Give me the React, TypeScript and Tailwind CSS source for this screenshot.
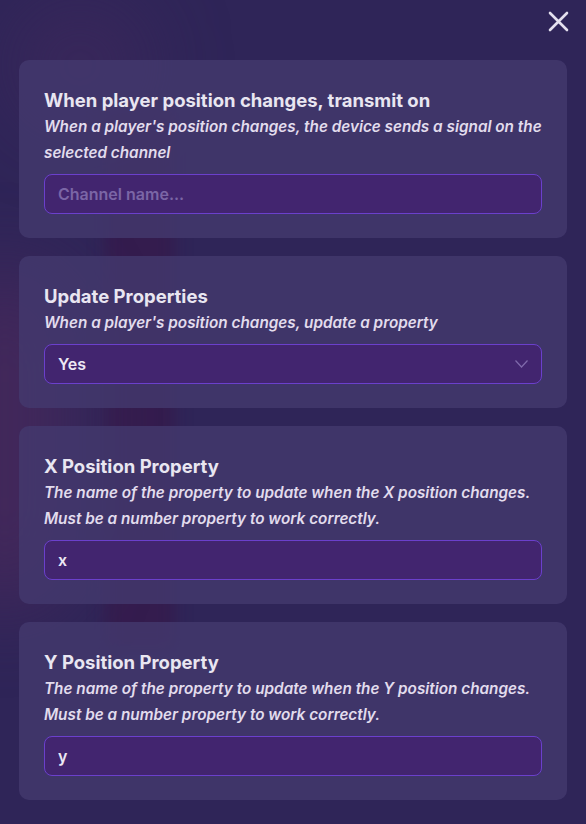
import { useState } from 'react';

const fields = [
  {
    title: 'When player position changes, transmit on',
    description: "When a player's position changes, the device sends a signal on the selected channel",
    kind: 'input',
    value: '',
    placeholder: 'Channel name...',
  },
  {
    title: 'Update Properties',
    description: "When a player's position changes, update a property",
    kind: 'select',
    value: 'Yes',
    placeholder: '',
  },
  {
    title: 'X Position Property',
    description: 'The name of the property to update when the X position changes. Must be a number property to work correctly.',
    kind: 'input',
    value: 'x',
    placeholder: '',
  },
  {
    title: 'Y Position Property',
    description: 'The name of the property to update when the Y position changes. Must be a number property to work correctly.',
    kind: 'input',
    value: 'y',
    placeholder: '',
  },
];

function Field({ field }: { field: (typeof fields)[number] }) {
  const [value, setValue] = useState(field.value);

  return (
    <div className="rounded-[10px] bg-[#433a6e]/80 px-[25px] pt-[26px] pb-6">
      <h2 className="text-[18.5px] leading-7 font-bold text-[#e9e6f1]">{field.title}</h2>
      <p className="text-[15.3px] leading-[26px] font-semibold italic text-[#e2dced]">{field.description}</p>
      {field.kind === 'select' ? (
        <div className="mt-2 flex h-10 items-center justify-between rounded-lg border border-[#6b40cc] bg-[#42256f] pr-[13px] pl-[13px]">
          <span className="text-base font-semibold text-[#ece8f4]">{value}</span>
          <svg width="13" height="8" viewBox="0 0 13 8" fill="none" stroke="#7f6aab" strokeWidth="1.2">
            <path d="M0.5 0.5 L6.5 7 L12.5 0.5" />
          </svg>
        </div>
      ) : (
        <input
          value={value}
          onChange={(e) => setValue(e.target.value)}
          placeholder={field.placeholder}
          className="mt-2 block h-10 w-full rounded-lg border border-[#6b40cc] bg-[#42256f] px-[13px] text-base font-semibold text-[#ece8f4] outline-none placeholder:text-[#7b66a6]"
        />
      )}
    </div>
  );
}

export default function App() {
  return (
    <div className="relative min-h-[824px] w-full overflow-hidden bg-[#2f2558] font-['Inter',sans-serif]">
      {/* blurred game scene behind the panel */}
      <div className="pointer-events-none absolute top-[110px] left-[105px] h-[540px] w-[70px] bg-[#341c4e] blur-sm" />
      <div className="pointer-events-none absolute top-[270px] -left-[60px] h-[340px] w-[130px] rounded-full bg-[#4c2a5c]/70 blur-2xl" />
      <div className="pointer-events-none absolute top-0 left-[10px] h-[130px] w-[140px] rounded-full bg-[#43295e]/50 blur-2xl" />

      <div className="relative">
        <div className="flex h-[60px] items-start justify-end pt-[11px] pr-[17px]">
          <button className="text-[#e4e0ee]">
            <svg width="21" height="21" viewBox="0 0 21 21" stroke="currentColor" strokeWidth="2.6" strokeLinecap="round">
              <path d="M2 2 L19 19 M19 2 L2 19" />
            </svg>
          </button>
        </div>

        <div className="flex flex-col gap-[18px] px-[19px]">
          {fields.map((field) => (
            <Field key={field.title} field={field} />
          ))}
        </div>
      </div>
    </div>
  );
}
